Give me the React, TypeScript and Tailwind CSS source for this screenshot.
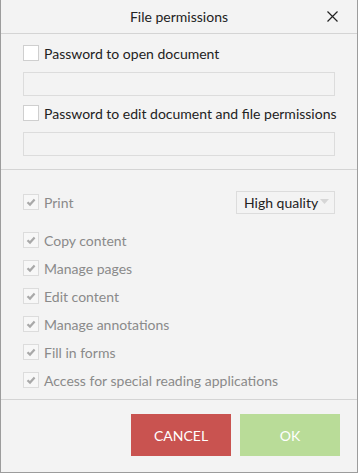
import React from 'react';

const perms = [
  'Copy content',
  'Manage pages',
  'Edit content',
  'Manage annotations',
  'Fill in forms',
  'Access for special reading applications',
];

function Box({ checked, disabled }: { checked?: boolean; disabled?: boolean }) {
  return (
    <span
      className={
        'flex h-[16px] w-[16px] flex-none items-center justify-center border ' +
        (disabled ? 'border-[#dcdcdc] bg-[#f7f7f7]' : 'border-[#cfcfcf] bg-white')
      }
    >
      {checked && (
        <svg width="10" height="10" viewBox="0 0 10 10">
          <path d="M1.5 5.2 L4 7.6 L8.6 2.6" stroke="#a9a9a9" strokeWidth="2.2" fill="none" />
        </svg>
      )}
    </span>
  );
}

export default function App() {
  return (
    <div
      className="flex h-[473px] w-[358px] flex-col border-x border-b border-[#9c9c9c] bg-[#f3f3f3] text-[#222]"
      style={{ fontFamily: 'Lato, "Noto Sans", sans-serif' }}
    >
      {/* title bar */}
      <div className="relative flex h-[34px] flex-none items-center justify-center border-b border-[#d4d4d4]">
        <span className="text-[14px]">File permissions</span>
        <svg className="absolute right-[19px] top-[11px]" width="11" height="11" viewBox="0 0 11 11">
          <path d="M0.5 0.5 L10.5 10.5 M10.5 0.5 L0.5 10.5" stroke="#222" strokeWidth="1.2" />
        </svg>
      </div>

      {/* passwords */}
      <div className="flex flex-col px-[22px] pb-[13px] pt-[8px]">
        <label className="flex h-[22px] items-center gap-[5px] text-[14px]">
          <Box />
          Password to open document
        </label>
        <div className="mt-[8px] h-[24px] border border-[#dcdcdc] bg-[#f3f3f3]" />
        <label className="mt-[6px] flex h-[22px] items-center gap-[5px] whitespace-nowrap text-[14px]">
          <Box />
          Password to edit document and file permissions
        </label>
        <div className="mt-[8px] h-[24px] border border-[#dcdcdc] bg-[#f3f3f3]" />
      </div>

      {/* permissions */}
      <div className="flex flex-col border-t border-[#d4d4d4] px-[22px] pb-[5px] pt-[18px] text-[14px] text-[#8a8a8a]">
        <div className="flex h-[28px] items-center justify-between">
          <div className="flex items-center gap-[5px]">
            <Box checked disabled />
            Print
          </div>
          <div className="flex h-[23px] w-[99px] items-center border border-[#dcdcdc] pl-[7px] text-[#222]">
            <span>High quality</span>
            <svg className="ml-[2px]" width="9" height="6" viewBox="0 0 9 6">
              <path d="M0 0 L9 0 L4.5 5 Z" fill="#d6d6d6" />
            </svg>
          </div>
        </div>
        <div className="mt-[10px] flex flex-col">
          {perms.map((p) => (
            <div key={p} className="flex h-[28px] items-center gap-[5px]">
              <Box checked disabled />
              {p}
            </div>
          ))}
        </div>
      </div>

      {/* footer */}
      <div className="flex flex-1 justify-end gap-[9px] border-t border-[#d4d4d4] pr-[17px] pt-[14px]">
        <button className="h-[42px] w-[100px] bg-[#c95350] text-[14px] text-white">CANCEL</button>
        <button className="h-[42px] w-[100px] bg-[#b9dc98] text-[14px] text-white">OK</button>
      </div>
    </div>
  );
}
